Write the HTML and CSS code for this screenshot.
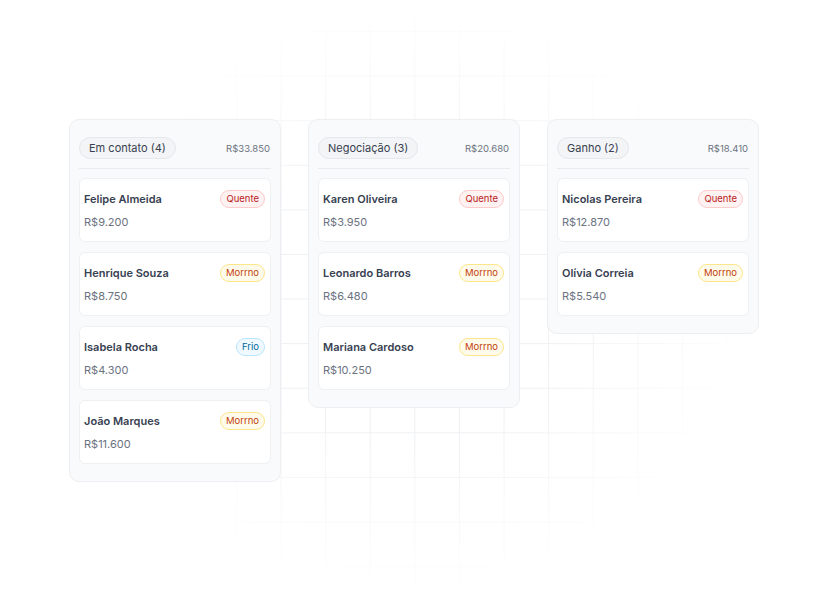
FILE: index.html
```html
<!DOCTYPE html>
<html lang="pt-BR">
<head>
    <meta charset="UTF-8">
    <meta name="viewport" content="width=device-width, initial-scale=1.0">
    <title>Funil de Vendas</title>
    <link rel="stylesheet" href="styles.css">
</head>
<body>
    <div class="board">
        <!-- Em contato -->
        <div class="column">
            <div class="column-header">
                <span class="stage-pill">Em contato (4)</span>
                <span class="stage-total">R$33.850</span>
            </div>
            <div class="card">
                <div class="card-top">
                    <strong>Felipe Almeida</strong>
                    <span class="tag tag-quente">Quente</span>
                </div>
                <span class="valor">R$9.200</span>
            </div>
            <div class="card">
                <div class="card-top">
                    <strong>Henrique Souza</strong>
                    <span class="tag tag-morno">Morrno</span>
                </div>
                <span class="valor">R$8.750</span>
            </div>
            <div class="card">
                <div class="card-top">
                    <strong>Isabela Rocha</strong>
                    <span class="tag tag-frio">Frio</span>
                </div>
                <span class="valor">R$4.300</span>
            </div>
            <div class="card">
                <div class="card-top">
                    <strong>João Marques</strong>
                    <span class="tag tag-morno">Morrno</span>
                </div>
                <span class="valor">R$11.600</span>
            </div>
        </div>

        <!-- Negociação -->
        <div class="column">
            <div class="column-header">
                <span class="stage-pill">Negociação (3)</span>
                <span class="stage-total">R$20.680</span>
            </div>
            <div class="card">
                <div class="card-top">
                    <strong>Karen Oliveira</strong>
                    <span class="tag tag-quente">Quente</span>
                </div>
                <span class="valor">R$3.950</span>
            </div>
            <div class="card">
                <div class="card-top">
                    <strong>Leonardo Barros</strong>
                    <span class="tag tag-morno">Morrno</span>
                </div>
                <span class="valor">R$6.480</span>
            </div>
            <div class="card">
                <div class="card-top">
                    <strong>Mariana Cardoso</strong>
                    <span class="tag tag-morno">Morrno</span>
                </div>
                <span class="valor">R$10.250</span>
            </div>
        </div>

        <!-- Ganho -->
        <div class="column">
            <div class="column-header">
                <span class="stage-pill">Ganho (2)</span>
                <span class="stage-total">R$18.410</span>
            </div>
            <div class="card">
                <div class="card-top">
                    <strong>Nicolas Pereira</strong>
                    <span class="tag tag-quente">Quente</span>
                </div>
                <span class="valor">R$12.870</span>
            </div>
            <div class="card">
                <div class="card-top">
                    <strong>Olívia Correia</strong>
                    <span class="tag tag-morno">Morrno</span>
                </div>
                <span class="valor">R$5.540</span>
            </div>
        </div>
    </div>
</body>
</html>
```

FILE: styles.css
```css
body {
    font-family: Inter, "Noto Sans", sans-serif;
    margin: 0;
    padding: 0;
    min-height: 600px;
    background-color: #fff;
    /* grade de fundo que some nas bordas */
    background-image:
        radial-gradient(ellipse 330px 300px at 50% 50%, rgba(255, 255, 255, 0) 45%, #fff 100%),
        linear-gradient(to right, #eef0f3 1px, transparent 1px),
        linear-gradient(to bottom, #eef0f3 1px, transparent 1px);
    background-size: 100% 100%, 44.6px 44.6px, 44.6px 44.6px;
    background-position: 0 0, 13px 31px, 13px 31px;
}

.board {
    display: flex;
    justify-content: center;
    align-items: flex-start;
    gap: 27px;
    padding-top: 119px;
}

.column {
    width: 212px;
    box-sizing: border-box;
    padding: 17px 9px 17px;
    background: #f9fafb;
    border: 1px solid #eceef1;
    border-radius: 10px;
    display: flex;
    flex-direction: column;
    gap: 10px;
}

.column-header {
    display: flex;
    justify-content: space-between;
    align-items: center;
    padding-bottom: 9px;
    margin-bottom: -1px;
    border-bottom: 1px solid #e8eaed;
}

.stage-pill {
    display: inline-block;
    padding: 3px 9px;
    font-size: 11px;
    line-height: 14px;
    color: #374151;
    background: #f3f4f6;
    border: 1px solid #e5e7eb;
    border-radius: 999px;
}

.stage-total {
    font-size: 9.5px;
    color: #6b7280;
    padding-right: 1px;
}

.card {
    background: #fff;
    border: 1px solid #eef0f2;
    border-radius: 6px;
    padding: 11px 5px 11px 4px;
    display: flex;
    flex-direction: column;
    gap: 6px;
}

.card-top {
    display: flex;
    justify-content: space-between;
    align-items: center;
}

.card-top strong {
    font-size: 11px;
    font-weight: 600;
    color: #374151;
}

.tag {
    font-size: 9.5px;
    line-height: 12px;
    padding: 2px 5px;
    border-radius: 999px;
    border: 1px solid;
}

.tag-quente {
    color: #b91c1c;
    background: #fef2f2;
    border-color: #fecaca;
}

.tag-morno {
    color: #c2410c;
    background: #fffbeb;
    border-color: #fde68a;
}

.tag-frio {
    color: #0369a1;
    background: #f0f9ff;
    border-color: #bae6fd;
}

.valor {
    font-size: 11px;
    color: #6b7280;
    line-height: 16px;
}
```
